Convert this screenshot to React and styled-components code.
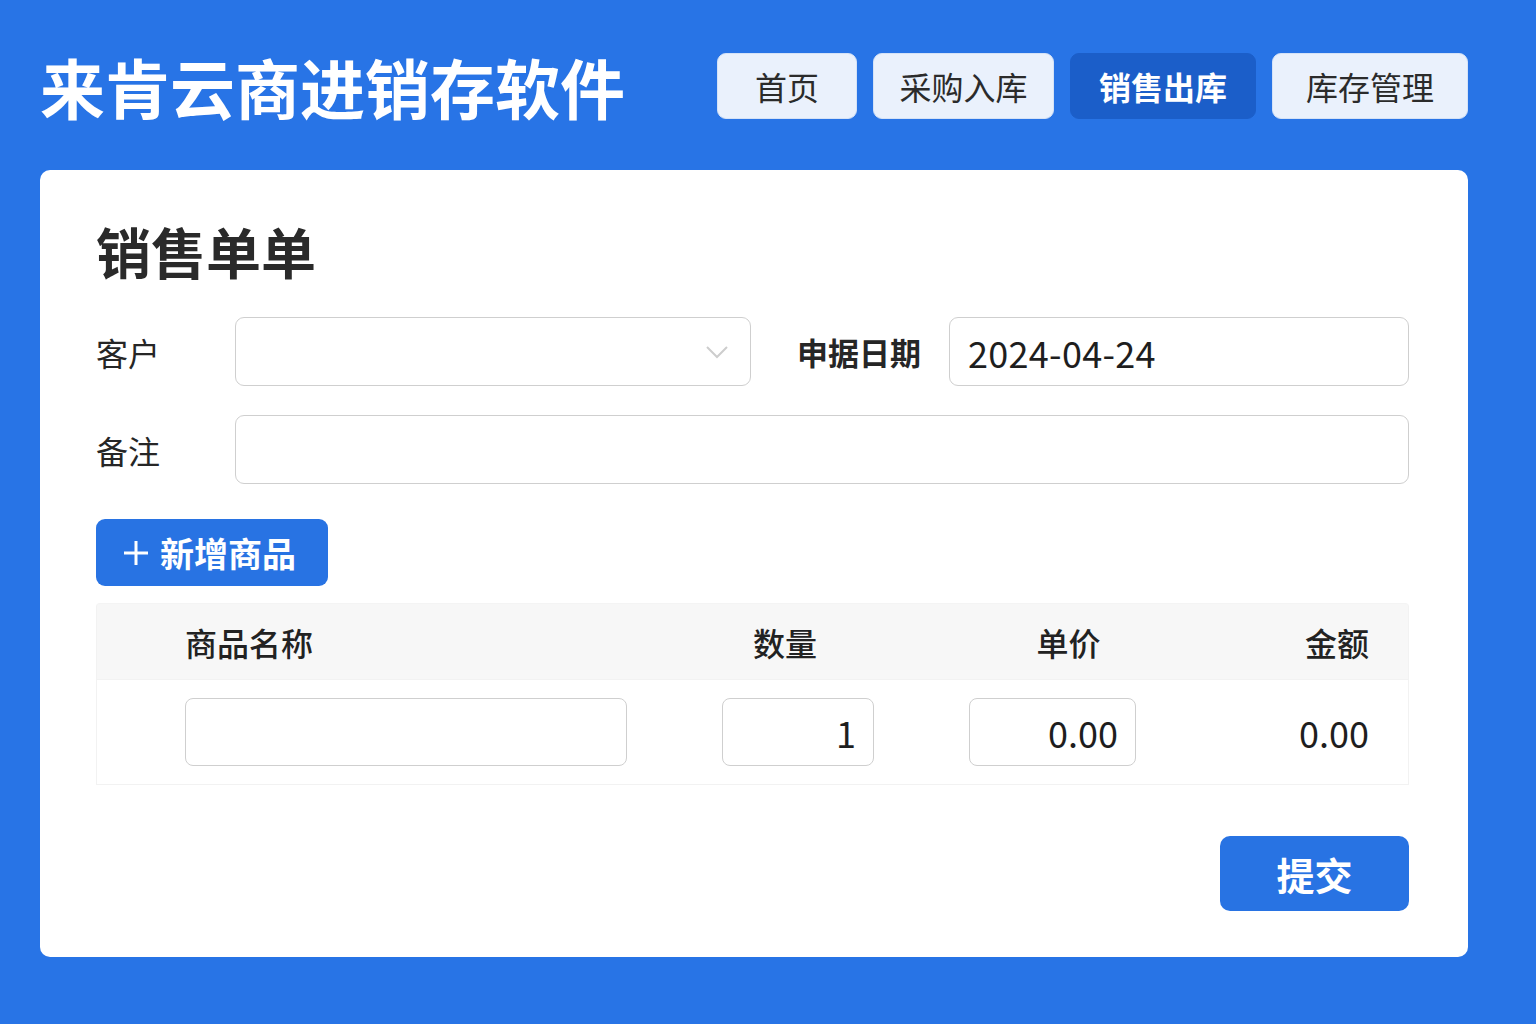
import React from "react";
import styled, { createGlobalStyle } from "styled-components";

const GlobalStyle = createGlobalStyle`
  html, body {
    margin: 0;
    padding: 0;
    background: #2874e6;
    font-family: "Noto Sans CJK SC", "Noto Sans", sans-serif;
  }
`;

const Page = styled.div`
  width: 1536px;
  height: 1024px;
  box-sizing: border-box;
  padding: 53px 68px 0 40px;
  background: #2874e6;
`;

const Header = styled.div`
  display: flex;
  align-items: center;
  justify-content: space-between;
  height: 66px;
`;

const AppTitle = styled.h1`
  margin: 0;
  color: #fff;
  font-size: 65px;
  font-weight: 700;
  line-height: 1;
`;

const Nav = styled.div`
  display: flex;
  gap: 16px;
`;

const NavButton = styled.button`
  height: 66px;
  width: ${(p) => p.w}px;
  padding: 0;
  border: 1px solid ${(p) => (p.active ? "#1b5ec9" : "#d4e2f7")};
  border-radius: 9px;
  background: ${(p) => (p.active ? "#1b5ec9" : "#eaf1fc")};
  color: ${(p) => (p.active ? "#fff" : "#2b2b2b")};
  font-family: inherit;
  font-size: 32px;
  font-weight: ${(p) => (p.active ? 700 : 400)};
  line-height: 1;
`;

const Card = styled.div`
  margin-top: 51px;
  background: #fff;
  border-radius: 10px;
  padding: 50px 59px 46px 56px;
`;

const FormTitle = styled.h2`
  margin: 0;
  font-size: 55px;
  line-height: 60px;
  font-weight: 700;
  color: #2a2a2a;
`;

const FormGrid = styled.div`
  margin-top: 37px;
  display: grid;
  grid-template-columns: 139px 516px auto 1fr;
  row-gap: 29px;
  align-items: center;
`;

const Label = styled.label`
  font-size: ${(p) => (p.strong ? 31 : 32)}px;
  font-weight: ${(p) => (p.strong ? 600 : 400)};
  color: #262626;
  padding: ${(p) => (p.strong ? "0 28px 0 46px" : "0")};
`;

const Field = styled.div`
  height: 69px;
  box-sizing: border-box;
  border: 1.5px solid #cfcfcf;
  border-radius: 9px;
  display: flex;
  align-items: center;
  padding: 0 19px 0 18px;
  font-size: 36px;
  color: #1e1e1e;
  letter-spacing: 0.3px;
  grid-column: ${(p) => p.span || "auto"};
`;

const Chevron = styled.svg`
  margin-left: auto;
  margin-right: 2px;
`;

const AddButton = styled.button`
  margin-top: 35px;
  height: 67px;
  width: 232px;
  border: none;
  border-radius: 9px;
  background: #2873e3;
  color: #fff;
  font-family: inherit;
  font-size: 34px;
  font-weight: 700;
  display: flex;
  align-items: center;
  gap: 10px;
  padding: 0 0 0 26px;
`;

const Table = styled.div`
  margin-top: 17px;
`;

const Row = styled.div`
  display: grid;
  grid-template-columns: 442px 152px 167px 1fr;
  column-gap: 95px;
  align-items: center;
  box-sizing: border-box;
  padding: 0 39px 0 88px;
  height: ${(p) => (p.head ? 77 : 105)}px;
  background: ${(p) => (p.head ? "#f7f7f7" : "#fff")};
  border: 1px solid #f2f2f2;
  border-top: ${(p) => (p.head ? "1px solid #f4f4f4" : "none")};
  border-radius: ${(p) => (p.head ? "4px 4px 0 0" : "0")};
`;

const Head = styled.div`
  font-size: 32px;
  font-weight: 500;
  color: #222;
  text-align: ${(p) => p.align || "left"};
  margin-left: ${(p) => p.shift || 0}px;
`;

const Cell = styled.div`
  height: 68px;
  box-sizing: border-box;
  border: 1.5px solid #cfcfcf;
  border-radius: 8px;
  display: flex;
  align-items: center;
  justify-content: flex-end;
  padding: 0 17px;
  font-size: 36px;
  color: #1e1e1e;
`;

const Amount = styled.div`
  text-align: right;
  font-size: 36px;
  color: #1e1e1e;
`;

const Footer = styled.div`
  display: flex;
  justify-content: flex-end;
  margin-top: 51px;
`;

const SubmitButton = styled.button`
  width: 189px;
  height: 75px;
  border: none;
  border-radius: 10px;
  background: #2873e3;
  color: #fff;
  font-family: inherit;
  font-size: 38px;
  font-weight: 700;
`;

const navItems = [
  { label: "首页", w: 140 },
  { label: "采购入库", w: 181 },
  { label: "销售出库", w: 186, active: true },
  { label: "库存管理", w: 196 },
];

export default function App() {
  return (
    <Page>
      <GlobalStyle />
      <Header>
        <AppTitle>来肯云商进销存软件</AppTitle>
        <Nav>
          {navItems.map((n) => (
            <NavButton key={n.label} w={n.w} active={n.active}>
              {n.label}
            </NavButton>
          ))}
        </Nav>
      </Header>

      <Card>
        <FormTitle>销售单单</FormTitle>

        <FormGrid>
          <Label>客户</Label>
          <Field>
            <Chevron width="24" height="14" viewBox="0 0 24 14">
              <path d="M2 2 L12 12 L22 2" fill="none" stroke="#cdcdcd" strokeWidth="2" />
            </Chevron>
          </Field>
          <Label strong>申据日期</Label>
          <Field>2024-04-24</Field>

          <Label>备注</Label>
          <Field span="2 / -1" />
        </FormGrid>

        <AddButton>
          <svg width="28" height="28" viewBox="0 0 28 28">
            <path d="M14 2 V26 M2 14 H26" stroke="#fff" strokeWidth="3" />
          </svg>
          新增商品
        </AddButton>

        <Table>
          <Row head>
            <Head>商品名称</Head>
            <Head align="center" shift={-26}>数量</Head>
            <Head align="center" shift={32}>单价</Head>
            <Head align="right">金额</Head>
          </Row>
          <Row>
            <Cell />
            <Cell>1</Cell>
            <Cell>0.00</Cell>
            <Amount>0.00</Amount>
          </Row>
        </Table>

        <Footer>
          <SubmitButton>提交</SubmitButton>
        </Footer>
      </Card>
    </Page>
  );
}
